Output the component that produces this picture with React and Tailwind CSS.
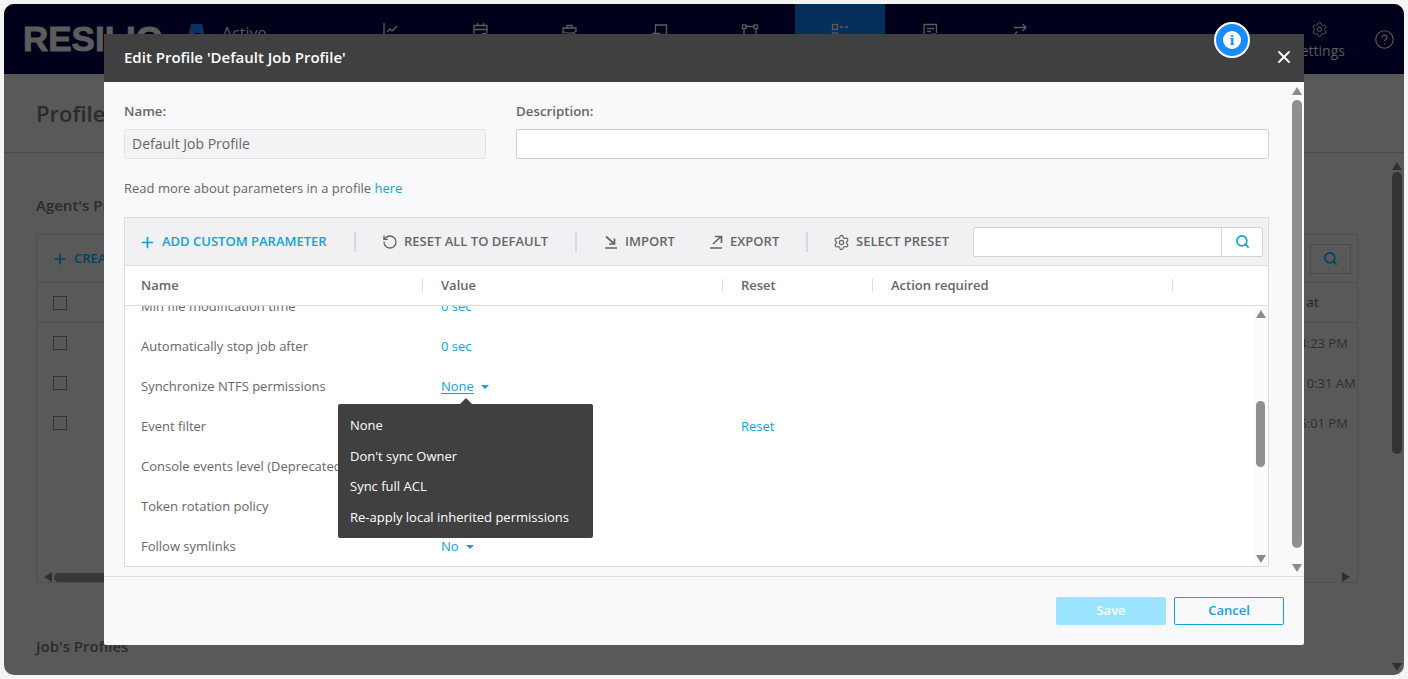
import { CircleHelp, Plus, RotateCcw, Search, Settings, X } from 'lucide-react'

const font = { fontFamily: '"Open Sans", sans-serif' }

// nav icons are only half visible above the modal, drawn to fit the strokes of the picture
const navPaths = [
  <><path d="M4 1v18h14" /><path d="M7 10l3-3 2 2 5-5" /></>,
  <><path d="M7.500 1v3M13.500 1v3M17 11V3.500H4v12h6" /><path d="M4 7.500h13" /><circle cx="14.500" cy="15" r="3.500" /></>,
  <><path d="M7 6V3.500h5V6" /><path d="M16 10V6H3v10h8" /><path d="M3 9.500c4 2 9 2 13 0" /><circle cx="14.500" cy="14.500" r="2.500" /></>,
  <><path d="M5.500 11V3h11v9" /><path d="M2.500 11.500h7v6h-7zM11 12.500h6.500v5H11z" /></>,
  <><path d="M6 4.500h8M4 7v7M16 7v7M6 16h8" /><rect x="2.500" y="3" width="3.500" height="3.500" /><rect x="14" y="3" width="3.500" height="3.500" /><rect x="2.500" y="14" width="3.500" height="3.500" /><rect x="14" y="14" width="3.500" height="3.500" /></>,
  <><rect x="2.500" y="2.500" width="5" height="5" /><path d="M10 5h3M15 5h3" /><rect x="2.500" y="11" width="5" height="5" /><path d="M10 13.500h3M15 13.500h3" /></>,
  <><path d="M10 17H4V2.500h12.500V11" /><path d="M7 6.500h7M7 9.500h4" /><circle cx="14" cy="14.500" r="2.500" /></>,
  <><path d="M4 5.500h12M12.500 2l3.500 3.500L12.500 9" /><path d="M16 13H4M7.500 9.500L4 13l3.500 3.500" /></>,
]

function NavIcon({ children }) {
  return (
    <svg viewBox="0 0 20 20" className="h-[20px] w-[20px] fill-none stroke-[#5c5c5c] stroke-[1.300]">
      {children}
    </svg>
  )
}

function Arrow({ dir = 'up', className = '' }) {
  const points = {
    up: '0,8 5,0 10,8',
    down: '0,0 10,0 5,8',
    left: '8,0 8,10 0,5',
    right: '0,0 8,5 0,10',
  }[dir]
  const size = dir === 'left' || dir === 'right' ? 'h-[10px] w-[8px]' : 'h-[8px] w-[10px]'
  const box = dir === 'left' || dir === 'right' ? '0 0 8 10' : '0 0 10 8'
  return (
    <svg viewBox={box} className={`${size} shrink-0 fill-current ${className}`}>
      <polygon points={points} />
    </svg>
  )
}

function Caret() {
  return <span className="ml-[7px] inline-block h-0 w-0 border-x-[4px] border-t-[4px] border-x-transparent border-t-[#0fa3d8]" />
}

function ImportIcon() {
  return (
    <svg viewBox="0 0 16 16" className="h-4 w-4 fill-none stroke-[#666] stroke-[1.700]">
      <path d="M3 2.500l8 7M11.500 4.500v5.500H6M2 14h12" />
    </svg>
  )
}

function ExportIcon() {
  return (
    <svg viewBox="0 0 16 16" className="h-4 w-4 fill-none stroke-[#666] stroke-[1.700]">
      <path d="M5 10l8-7.500M7 2.500h6.500V9M2 14h12" />
    </svg>
  )
}

function Divider() {
  return <span className="h-[20px] w-[2px] shrink-0 bg-[#d8d8dc]" />
}

function ToolButton({ icon, label, className = '' }) {
  return (
    <span className={`flex shrink-0 items-center gap-[6px] whitespace-nowrap pt-[1px] text-[13px] font-semibold ${className}`}>
      {icon}
      {label}
    </span>
  )
}

function ColHead({ label, width, pad }) {
  return (
    <div className={`flex h-full items-center ${width}`}>
      <span className={`flex-1 text-[13px] font-semibold text-[#666] ${pad}`}>{label}</span>
      <span className="h-[13px] w-px bg-[#dcdcdc]" />
    </div>
  )
}

function ParamRow({ name, value, caret, reset }) {
  return (
    <div className="flex h-[40px] shrink-0 items-center text-[13px] text-[#666]">
      <span className="w-[298px] whitespace-nowrap pl-[16px]">{name}</span>
      <span className="flex w-[300px] items-center pl-[18px] text-[#0fa3d8]">
        {value === 'None' ? <span className="underline underline-offset-2">{value}</span> : value}
        {caret && <Caret />}
      </span>
      {reset && <span className="pl-[18px] text-[#0fa3d8]">Reset</span>}
    </div>
  )
}

function BackgroundPage() {
  return (
    <div className="flex h-full flex-col">
      <header className="flex h-[70px] shrink-0 bg-[#00001a] text-[#5c5c5c]">
        <span className="ml-[19px] mt-[17px] w-[161px] text-[35px] leading-none font-bold [-webkit-text-stroke:1px_#5c5c5c]" style={{ fontFamily: '"Liberation Sans", sans-serif' }}>RESILIO</span>
        <svg viewBox="0 0 25 30" className="mt-[20px] h-[30px] w-[25px]">
          <polygon points="0,30 7,0 18,0 25,30" fill="#0a3263" />
          <polygon points="11,9 16,9 17,15 10,15" fill="#00001a" />
        </svg>
        <span className="ml-[13px] mt-[18px] w-[123px] text-[16px] leading-[22px]">Active</span>
        {navPaths.map((paths, i) => (
          <div key={i} className={`flex h-full w-[90px] justify-center pt-[18px] ${i === 5 ? 'bg-[#052e5a]' : ''}`}>
            <NavIcon>{paths}</NavIcon>
          </div>
        ))}
        <div className="ml-[209px] flex w-[90px] flex-col items-center pt-[17px]">
          <Settings className="h-[17px] w-[17px]" strokeWidth={1.4} />
          <span className="mt-[2px] text-[14px]">Settings</span>
        </div>
        <CircleHelp className="ml-[10px] mt-[25px] h-[21px] w-[21px]" strokeWidth={1.3} />
      </header>

      <div className="flex h-[79px] shrink-0 items-center border-b border-[#4a4a4a] pl-[32px] text-[22px] font-semibold text-[#2b2b2b]">Profiles</div>

      <div className="flex min-h-0 flex-1">
        <div className="min-w-0 flex-1 pl-[32px] pr-[31px]">
          <h2 className="pt-[41px] text-[15px] leading-[22px] font-semibold text-[#2b2b2b]">Agent's Profiles</h2>
          <div className="mt-[18px] h-[349px] border border-[#4e4e4e]">
            <div className="flex h-[48px] items-center justify-between border-b border-[#4e4e4e] pl-[15px] pr-[6px]">
              <span className="flex items-center gap-[6px] pt-[1px] text-[13px] font-semibold text-[#00445c]">
                <Plus className="h-4 w-4" strokeWidth={2.5} />
                CREATE
              </span>
              <span className="flex h-[30px] w-[41px] items-center justify-center border border-[#4a4a4a]">
                <Search className="h-[15px] w-[15px] text-[#00445c]" strokeWidth={2.5} />
              </span>
            </div>
            <div className="flex h-[40px] items-center justify-between border-b border-[#4e4e4e] pl-[16px] pr-[38px] text-[13px] text-[#2b2b2b]">
              <span className="h-[14px] w-[14px] border border-[#333]" />
              <span className="font-semibold">Created at</span>
            </div>
            <div className="flex h-[120px] flex-col text-[13px] text-[#2f2f2f]">
              {['1:14:23 PM', '10:10:31 AM', '1:16:01 PM'].map((t) => (
                <div key={t} className="flex h-[40px] items-center justify-between pl-[16px]">
                  <span className="h-[14px] w-[14px] border border-[#333]" />
                  <span className="w-[76px] whitespace-nowrap pt-[1px]">{t}</span>
                </div>
              ))}
            </div>
            <div className="mt-[129px] flex h-[10px] items-center justify-between px-[7px] text-[#2f2f2f]">
              <Arrow dir="left" />
              <span className="ml-[2px] mr-[700px] h-[9px] flex-1 rounded-full bg-[#373737]" />
              <Arrow dir="right" />
            </div>
          </div>
          <h2 className="pt-[52px] text-[15px] font-semibold text-[#2b2b2b]">Job's Profiles</h2>
        </div>
        <div className="flex w-[15px] shrink-0 flex-col items-center pt-[9px] pb-[4px] text-[#2f2f2f]">
          <Arrow dir="up" />
          <span className="mt-[2px] h-[282px] w-[10px] rounded-full bg-[#333]" />
          <span className="flex-1" />
          <Arrow dir="down" />
        </div>
      </div>
    </div>
  )
}

export default function App() {
  return (
    <div className="h-[679px] w-[1408px] overflow-hidden bg-[#f4f4f4] p-1" style={font}>
      <div className="relative h-[671px] w-[1400px] overflow-hidden rounded-[10px] bg-[#595959]">
        <BackgroundPage />

        {/* modal */}
        <div className="absolute left-[100px] top-[30px] flex h-[611px] w-[1200px] flex-col rounded-[2px] bg-[#f9f9fb]">
          <div className="flex h-[48px] shrink-0 items-center justify-between bg-[#404041] pl-[20px] pr-[10px] text-white">
            <span className="pb-[2px] text-[15px] font-semibold">Edit Profile 'Default Job Profile'</span>
            <X className="mb-[2px] h-[20px] w-[20px]" strokeWidth={2.2} />
          </div>

          <div className="flex min-h-0 flex-1">
            <div className="min-w-0 flex-1 pl-[20px] pr-[22px]">
              <div className="flex gap-[30px] pt-[20px]">
                <div className="w-[362px]">
                  <label className="block text-[13.300px] leading-[18px] font-semibold text-[#666]">Name:</label>
                  <div className="mt-[9px] flex h-[30px] items-center rounded-[2px] border border-[#e2e2e4] bg-[#f3f3f5] pb-[2px] pl-[7px] text-[14px] text-[#666]">Default Job Profile</div>
                </div>
                <div className="flex-1">
                  <label className="block text-[13.300px] leading-[18px] font-semibold text-[#666]">Description:</label>
                  <div className="mt-[9px] h-[30px] rounded-[2px] border border-[#cfcfcf] bg-white" />
                </div>
              </div>
              <p className="mt-[20px] text-[13px] leading-[18px] text-[#666]">
                Read more about parameters in a profile <span className="text-[#0fa3d8]">here</span>
              </p>

              <div className="mt-[20px] h-[350px] overflow-hidden border border-[#dcdcdf] bg-white">
                <div className="flex h-[48px] items-center border-b border-[#dcdcdf] bg-[#f1f1f4] pl-[16px] pr-[5px] text-[#666]">
                  <ToolButton className="w-[213px] text-[#0fa3d8]" icon={<Plus className="-ml-[2px] h-[17px] w-[17px]" strokeWidth={2.4} />} label="ADD CUSTOM PARAMETER" />
                  <Divider />
                  <ToolButton className="ml-[26px] w-[193px]" icon={<RotateCcw className="h-4 w-4" strokeWidth={2} />} label="RESET ALL TO DEFAULT" />
                  <Divider />
                  <ToolButton className="ml-[26px] w-[105px]" icon={<ImportIcon />} label="IMPORT" />
                  <ToolButton className="w-[98px]" icon={<ExportIcon />} label="EXPORT" />
                  <Divider />
                  <ToolButton className="ml-[25px] w-[140px]" icon={<Settings className="h-[17px] w-[17px]" strokeWidth={1.7} />} label="SELECT PRESET" />
                  <div className="flex h-[30px] flex-1 rounded-[2px] border border-[#d3d3d3] bg-white">
                    <span className="flex-1 border-r border-[#d3d3d3]" />
                    <span className="flex w-[40px] items-center justify-center">
                      <Search className="h-[15px] w-[15px] text-[#0fa3d8]" strokeWidth={2.6} />
                    </span>
                  </div>
                </div>
                <div className="flex h-[40px] items-center border-b border-[#dcdcdf]">
                  <ColHead label="Name" width="w-[298px]" pad="pl-[16px]" />
                  <ColHead label="Value" width="w-[300px]" pad="pl-[18px]" />
                  <ColHead label="Reset" width="w-[150px]" pad="pl-[18px]" />
                  <ColHead label="Action required" width="w-[300px]" pad="pl-[18px]" />
                </div>
                <div className="flex h-[260px] overflow-hidden">
                  <div className="-mt-[19px] flex min-w-0 flex-1 flex-col">
                    <ParamRow name="Min file modification time" value="0 sec" />
                    <ParamRow name="Automatically stop job after" value="0 sec" />
                    <ParamRow name="Synchronize NTFS permissions" value="None" caret />
                    <ParamRow name="Event filter" reset />
                    <ParamRow name="Console events level (Deprecated)" />
                    <ParamRow name="Token rotation policy" />
                    <ParamRow name="Follow symlinks" value="No" caret />
                  </div>
                  <div className="flex w-[15px] shrink-0 flex-col items-center bg-[#fbfbfb] pt-[4px] pb-[3px] text-[#8c8c8c]">
                    <Arrow dir="up" />
                    <span className="mt-[83px] h-[66px] w-[9px] rounded-full bg-[#8f8f8f]" />
                    <span className="flex-1" />
                    <Arrow dir="down" />
                  </div>
                </div>
              </div>
            </div>
            <div className="mr-[2px] flex w-[11px] shrink-0 flex-col items-center pt-[5px] pb-[4px] text-[#8c8c8c]">
              <Arrow dir="up" />
              <span className="mt-[5px] h-[448px] w-[10px] rounded-full bg-[#8f8f8f]" />
              <span className="flex-1" />
              <Arrow dir="down" />
            </div>
          </div>

          <div className="flex h-[69px] shrink-0 items-center justify-end gap-[8px] border-t border-[#dedee0] pr-[20px] text-[13px] font-semibold">
            <span className="flex h-[28px] w-[110px] items-center justify-center rounded-[2px] bg-[#9ae4ff] text-white">Save</span>
            <span className="flex h-[28px] w-[110px] items-center justify-center rounded-[2px] border border-[#0fa3d8] text-[#0fa3d8]">Cancel</span>
          </div>
        </div>

        {/* options menu of the NTFS row */}
        <div className="absolute left-[334px] top-[400px] h-[134px] w-[255px] rounded-[2px] bg-[#404041] pl-[12px] pt-[7px] text-[13px] font-medium text-white">
          <span className="absolute -top-[6px] left-[122px] h-0 w-0 border-x-[6px] border-b-[6px] border-x-transparent border-b-[#404041]" />
          <div className="flex h-[30px] items-center">None</div>
          <div className="flex h-[31px] items-center">Don't sync Owner</div>
          <div className="flex h-[30px] items-center">Sync full ACL</div>
          <div className="flex h-[31px] items-center">Re-apply local inherited permissions</div>
        </div>

        {/* info badge */}
        <div className="absolute left-[1210px] top-[18px] flex h-[36px] w-[36px] items-center justify-center rounded-full border-2 border-white bg-[#1a8cff]">
          <span className="flex h-[18px] w-[18px] items-center justify-center rounded-full bg-white text-[13px] leading-none font-extrabold text-[#1a8cff]" style={{ fontFamily: '"DejaVu Serif", serif' }}>i</span>
        </div>
      </div>
    </div>
  )
}
